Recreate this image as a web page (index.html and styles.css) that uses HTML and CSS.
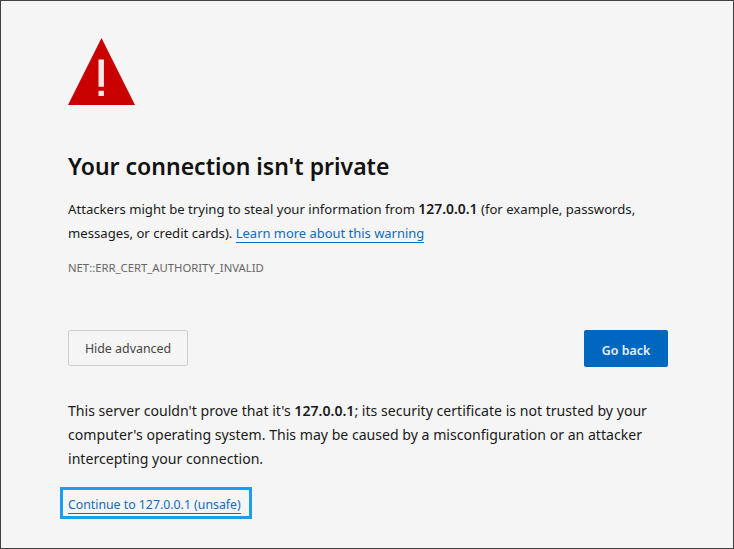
FILE: index.html
```html
<!DOCTYPE html>
<html lang="en">
<head>
<meta charset="utf-8">
<title>Privacy error</title>
<link rel="stylesheet" href="styles.css">
</head>
<body>
<main class="frame">
  <svg class="warn" width="68" height="68" viewBox="0 0 68 68" aria-hidden="true">
    <path class="warn-tri" d="M33.5 0 L67 67 L0 67 Z"/>
    <path class="warn-mark" d="M30.5 21.5h5.4v27.2h-5.4z M30.5 52.7h5.4v5.3h-5.4z"/>
  </svg>
  <h1 class="title">Your connection isn't private</h1>
  <p class="para">Attackers might be trying to steal your information from <strong>127.0.0.1</strong> (for example, passwords, messages, or credit cards). <a class="link link-inline" href="#">Learn more about this warning</a></p>
  <p class="code">NET::ERR_CERT_AUTHORITY_INVALID</p>
  <div class="actions">
    <button class="btn btn-plain">Hide advanced</button>
    <button class="btn btn-primary">Go back</button>
  </div>
  <p class="para para-detail">This server couldn't prove that it's <strong>127.0.0.1</strong>; its security certificate is not trusted by your computer's operating system. This may be caused by a misconfiguration or an attacker intercepting your connection.</p>
  <div class="focus-box"><a class="link" href="#">Continue to 127.0.0.1 (unsafe)</a></div>
</main>
</body>
</html>
```
FILE: styles.css
```css
* { box-sizing: border-box; }
html, body { margin: 0; padding: 0; background: #f5f5f5; }
body { width: 734px; height: 549px; overflow: hidden; font-family: "Noto Sans", sans-serif; }
.frame {
  width: 734px;
  height: 549px;
  background: #f5f5f5;
  border: 1px solid #404040;
  padding: 37px 65px 0 67px;
  display: flex;
  flex-direction: column;
  color: #1a1a1a;
}
.warn { display: block; flex: none; }
.warn-tri { fill: #c80000; }
.warn-mark { fill: #f5e8e8; }
.title { margin: 44px 0 0; font-size: 23px; line-height: 32px; font-weight: 600; color: #111; }
.para { margin: 15px 0 0; font-size: 13.15px; line-height: 24px; }
.para strong { font-weight: 600; font-size: 13.9px; }
.link { color: #0f6cbd; text-decoration: none; border-bottom: 1px solid #0f6cbd; }
.link-inline { font-size: 12.95px; }
.code { margin: 15px 0 0; font-size: 11.3px; line-height: 16px; color: #666; }
.actions { margin-top: 54px; display: flex; justify-content: space-between; align-items: flex-start; }
.btn { font-family: inherit; font-size: 12.4px; border-radius: 2px; padding: 0; }
.btn-plain { width: 120px; height: 36px; padding-top: 1px; background: #f5f5f5; border: 1px solid #ccc; color: #444; }
.btn-primary { width: 84px; height: 37px; padding-top: 3px; background: #0067c0; border: 0; color: #e8f2fb; font-weight: 600; }
.para-detail { margin-top: 32px; font-size: 14.1px; }
.para-detail strong { font-size: 14.1px; }
.focus-box { margin: 16px 0 0 -8px; align-self: flex-start; height: 32px; border: 3px solid #1a9ff0; padding: 5px 8px 0 5px; font-size: 12.3px; line-height: 19px; }
```
